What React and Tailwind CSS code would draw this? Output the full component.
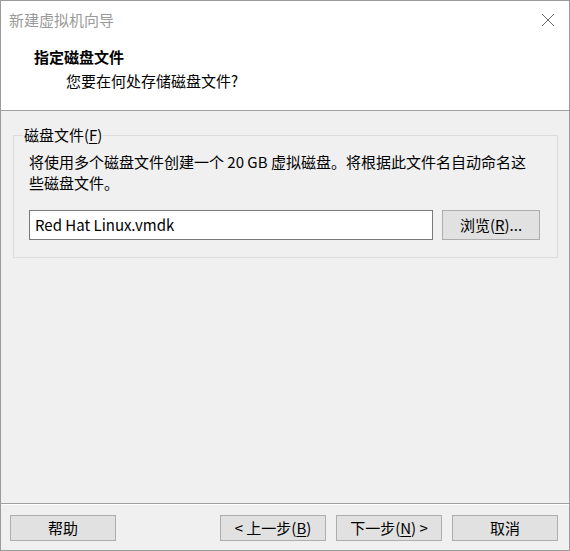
import React from "react";

const font = { fontFamily: '"Noto Sans CJK SC", "Noto Sans", sans-serif' };

function Btn({ children, className = "" }) {
  return (
    <button
      className={`h-[26px] w-[106px] shrink-0 border border-[#adadad] bg-[#e1e1e1] text-[15px] leading-[20px] text-black ${className}`}
    >
      {children}
    </button>
  );
}

export default function App() {
  return (
    <div
      className="flex h-[551px] w-[570px] flex-col border border-[#9b9b9b] bg-[#f0f0f0] text-[15px] text-black"
      style={font}
    >
      {/* header */}
      <div className="h-[110px] shrink-0 border-b border-[#a0a0a0] bg-white">
        <div className="flex items-start justify-between pl-[8px] pr-[14px] pt-[9px]">
          <span className="leading-[20px] text-[#9a9a9a]">新建虚拟机向导</span>
          <svg width="14" height="14" viewBox="0 0 14 14" className="mt-[3px]">
            <path d="M1 1 L13 13 M13 1 L1 13" stroke="#6b6b6b" strokeWidth="1" fill="none" />
          </svg>
        </div>
        <div className="pl-[33px] pt-[17px] font-bold leading-[20px]">指定磁盘文件</div>
        <div className="pl-[65px] pt-[4px] leading-[20px]">您要在何处存储磁盘文件?</div>
      </div>

      {/* body */}
      <div className="flex-1">
        <fieldset className="ml-[12px] mt-[14px] w-[545px] border border-[#dcdcdc] px-[15px] pb-[17px]">
          <legend className="ml-[-6px] px-[1px] leading-[20px]">
            磁盘文件(<u className="underline-offset-2">F</u>)
          </legend>
          <p className="w-[506px] pt-[6px] leading-[21px]">
            将使用多个磁盘文件创建一个 20 GB 虚拟磁盘。将根据此文件名自动命名这些磁盘文件。
          </p>
          <div className="mt-[17px] flex items-center gap-[9px]">
            <div className="flex h-[30px] w-[404px] items-center border border-[#7a7a7a] bg-white pl-[5px] leading-[20px]">
              Red Hat Linux.vmdk
            </div>
            <button className="h-[30px] w-[98px] border border-[#adadad] bg-[#e1e1e1] leading-[20px]">
              浏览(<u className="underline-offset-2">R</u>)...
            </button>
          </div>
        </fieldset>
      </div>

      {/* footer */}
      <div className="shrink-0">
        <div className="h-px bg-[#a0a0a0]" />
        <div className="h-px bg-white" />
        <div className="flex items-center px-[9px] pb-[9px] pt-[10px]">
          <Btn>帮助</Btn>
          <Btn className="ml-[104px]">
            &lt; 上一步(<u className="underline-offset-2">B</u>)
          </Btn>
          <Btn className="ml-[10px]">
            下一步(<u className="underline-offset-2">N</u>) &gt;
          </Btn>
          <Btn className="ml-[10px]">取消</Btn>
        </div>
      </div>
    </div>
  );
}
